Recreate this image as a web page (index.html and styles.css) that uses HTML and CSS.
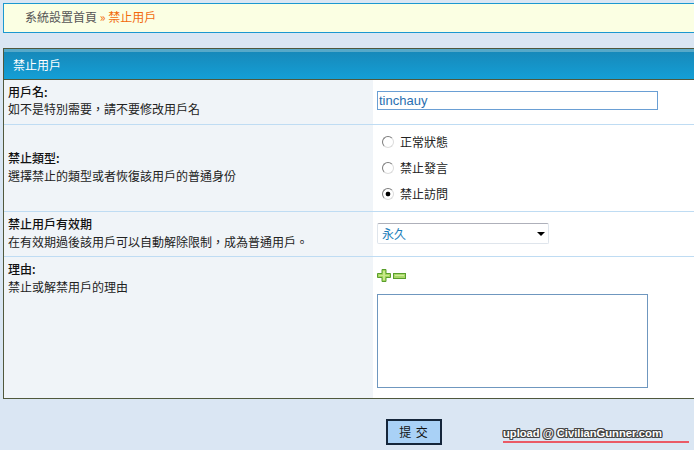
FILE: index.html
```html
<!DOCTYPE html>
<html lang="zh-Hant">
<head>
<meta charset="utf-8">
<title>禁止用戶</title>
<link rel="stylesheet" href="styles.css">
</head>
<body>
<div class="page">
  <nav class="crumbs"><span class="home">系統設置首頁</span> <span class="sep">»</span> <span class="current">禁止用戶</span></nav>
  <form class="panel">
    <h1 class="panel-title">禁止用戶</h1>
    <div class="row row-name">
      <div class="label"><strong>用戶名:</strong><p>如不是特別需要，請不要修改用戶名</p></div>
      <div class="field"><input class="text" type="text" value="tinchauy"></div>
    </div>
    <div class="row row-type">
      <div class="label"><strong>禁止類型:</strong><p>選擇禁止的類型或者恢復該用戶的普通身份</p></div>
      <div class="field radios">
        <label class="radio"><input type="radio" name="t"><span>正常狀態</span></label>
        <label class="radio"><input type="radio" name="t"><span>禁止發言</span></label>
        <label class="radio"><input type="radio" name="t" checked><span>禁止訪問</span></label>
      </div>
    </div>
    <div class="row row-expiry">
      <div class="label"><strong>禁止用戶有效期</strong><p>在有效期過後該用戶可以自動解除限制，成為普通用戶。</p></div>
      <div class="field"><div class="select-wrap"><select class="select"><option>永久</option></select><i class="arrow"></i></div></div>
    </div>
    <div class="row row-reason">
      <div class="label"><strong>理由:</strong><p>禁止或解禁用戶的理由</p></div>
      <div class="field">
        <div class="sizers">
          <svg width="14" height="13" viewBox="0 0 14 13"><path d="M5 .5h4v4h4.500v4H9v4H5v-4H.5v-4H5z" fill="#a4d65e" stroke="#5a9e2c"/><path d="M6 2h2v4h4v1H8v4H6V7H2V6h4z" fill="#c9e98c"/></svg>
          <svg width="13" height="6" viewBox="0 0 13 6"><rect x=".5" y=".5" width="12" height="5" fill="#a9d86a" stroke="#5a9e2c"/><rect x="2" y="2" width="9" height="1" fill="#d0ec9a"/></svg>
        </div>
        <textarea class="area"></textarea>
      </div>
    </div>
  </form>
  <div class="actions"><button class="submit" type="button">提 交</button></div>
  <div class="mark">upload @ CivilianGunner.com</div>
</div>
</body>
</html>
```
FILE: styles.css
```css
html, body { margin: 0; padding: 0; }
body {
  background: #dae6f3;
  font: 12px/18px "Noto Sans CJK TC", "Liberation Sans", sans-serif;
  color: #333;
}
.page { position: relative; width: 694px; height: 450px; overflow: hidden; padding: 3px 0 0 3px; box-sizing: border-box; }
.crumbs {
  width: 700px; height: 30px; box-sizing: border-box;
  border: 1px solid #1b98d0; background: #fbffe3;
  padding: 4px 0 0 21px; color: #555;
}
.sep, .current { color: #f26a0c; }
.panel {
  width: 700px; height: 351px; box-sizing: border-box; margin-top: 15px;
  border: 1px solid #50583c; background: #fff;
  display: flex; flex-direction: column;
}
.panel-title {
  margin: 0; height: 31px; box-sizing: border-box; flex: none;
  padding: 4px 0 0 9px;
  font-size: 12px; line-height: 18px; font-weight: normal; color: #fff;
  border-top: 3px solid #57a9c9;
  border-bottom: 1px solid #50583c;
  background: linear-gradient(#1789ba, #149fd6);
}
.row { display: grid; grid-template-columns: 369px 1fr; box-sizing: border-box; border-bottom: 1px solid #bfdcf3; }
.row-name { height: 45px; }
.row-type { height: 87px; }
.row-expiry { height: 45px; }
.row-reason { flex: 1; border-bottom: 0; }
.label { background: #f0f4f8; padding: 3px 0 0 4px; color: #222; }
.label strong { display: block; font-weight: 500; color: #111; line-height: 18px; }
.label p { margin: 0; line-height: 18px; }
.row-name .label p { line-height: 16px; }
.row-type .label { padding-top: 24px; }
.row-expiry .label { padding-top: 3px; }
.row-reason .label { padding-top: 3px; }
.field { padding-left: 4px; }
.text {
  display: block; width: 281px; height: 19px; box-sizing: border-box; margin: 11px 0 0;
  padding: 0 1px; border: 1px solid #6a9fd4; background: #fff;
  font: 13px "Liberation Sans", sans-serif; color: #2a6fb0; outline: 0;
}
.radios { display: flex; flex-direction: column; padding: 4px 0 0 9px; }
.radio { display: flex; align-items: center; height: 26px; color: #222; }
.radio input {
  appearance: none; box-sizing: border-box; margin: 0 6px 0 0; width: 12px; height: 12px; flex: none;
  border: 1px solid; border-color: #7c7c7c #dcdcdc #dcdcdc #7c7c7c; border-radius: 50%; background: #fff;
}
.radio input:checked { background: radial-gradient(circle, #000 2px, #fff 2.700px); }
.select-wrap { position: relative; width: 172px; height: 21px; margin-top: 11px; }
.select {
  appearance: none; display: block; width: 100%; height: 100%; box-sizing: border-box;
  border: 1px solid #dfe5ec; border-top-color: #aeb0ba; border-radius: 2px;
  background: #fff; padding: 0 0 0 4px; margin: 0;
  font: 12px "Noto Sans CJK TC", sans-serif; color: #1d7fbb;
}
.arrow {
  position: absolute; right: 4px; top: 9px; width: 0; height: 0;
  border: 4px solid transparent; border-top: 4px solid #000; border-bottom: 0;
}
.sizers { display: flex; align-items: center; gap: 2px; height: 13px; margin-top: 12px; }
.area {
  display: block; width: 271px; height: 94px; box-sizing: border-box; margin: 12px 0 0;
  border: 1px solid #6f97bf; background: #fff; resize: none; outline: 0; padding: 0;
}
.actions { padding: 20px 0 0 383px; }
.submit {
  display: block; width: 56px; height: 26px; box-sizing: border-box; padding: 0;
  border: 2px solid #15263a; background: #a9d1f6; color: #111;
  font: 12px/20px "Noto Sans CJK TC", sans-serif; letter-spacing: 1px;
}
.mark {
  position: absolute; left: 503px; top: 426px; width: 186px; height: 15px;
  border-bottom: 2px solid #ea5a66;
  font: bold 11.200px/14px "Liberation Sans", sans-serif; color: #fff; white-space: nowrap;
  text-shadow: 1px 0 #444, -1px 0 #444, 0 1px #444, 0 -1px #444, 1px 1px #444, -1px -1px #444, 1px -1px #444, -1px 1px #444;
}
```
